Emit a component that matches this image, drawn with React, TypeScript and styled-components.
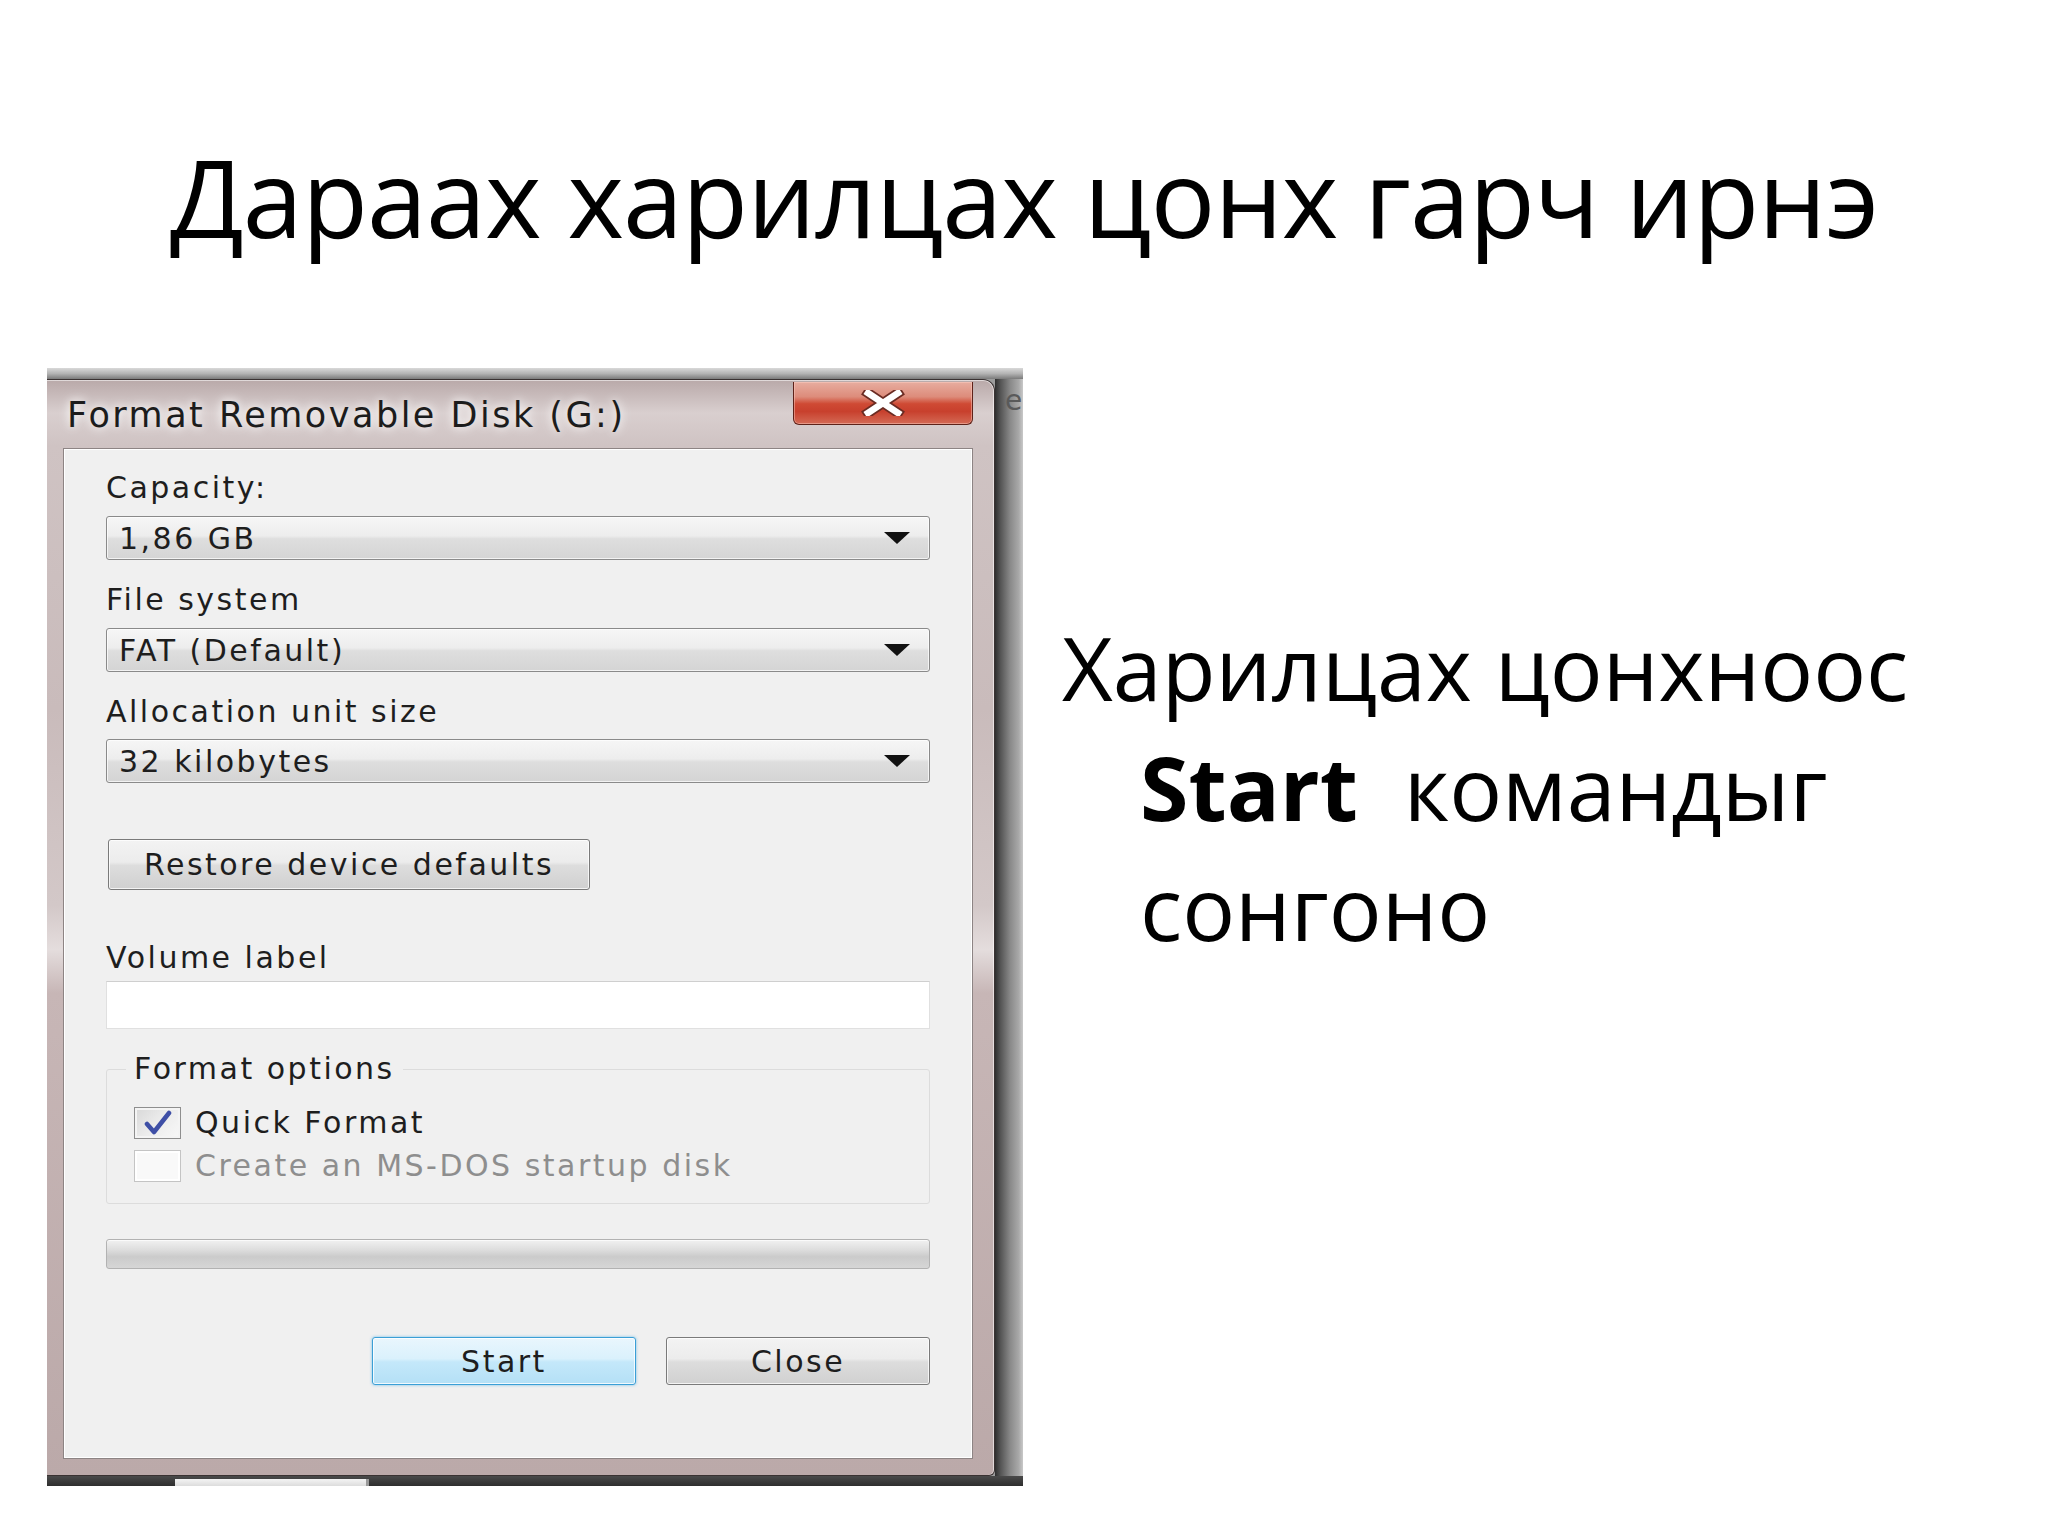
import React from "react";
import styled, { createGlobalStyle } from "styled-components";

const Global = createGlobalStyle`
  html, body { margin: 0; padding: 0; background: #ffffff; }
  body { width: 2048px; height: 1536px; overflow: hidden; font-family: "Open Sans", "Noto Sans", sans-serif; color: #000; }
  * { box-sizing: border-box; }
`;

const Page = styled.div`
  width: 2048px;
  height: 1536px;
  background: #ffffff;
  display: flex;
  flex-direction: column;
`;

const Title = styled.h1`
  margin: 0;
  padding-top: 143px;
  font-family: "Open Sans", "Noto Sans", sans-serif;
  font-weight: 400;
  font-size: 108px;
  line-height: 108px;
  text-align: center;
  color: #000;
  letter-spacing: -1px;
`;

const Content = styled.div`
  margin-top: 117px;
  padding-left: 47px;
  display: flex;
  align-items: flex-start;
  gap: 39px;
`;

/* ---------- screenshot of the dialog ---------- */

const Shot = styled.div`
  width: 976px;
  height: 1118px;
  display: flex;
  flex-direction: column;
  background: #9c9c9c;
  overflow: hidden;
`;

const TopStrip = styled.div`
  height: 11px;
  background: linear-gradient(180deg, #d9d9d9 0%, #b4b4b4 50%, #7a7a7a 100%);
`;

const Middle = styled.div`
  height: 1097px;
  display: flex;
`;

const BottomStrip = styled.div`
  height: 10px;
  display: flex;
  background: linear-gradient(180deg, #4a4a4a 0%, #2e2e2e 100%);
`;

const BottomGap = styled.div<{ $w: number }>`
  width: ${(p) => p.$w}px;
`;

const BottomTab = styled.div`
  width: 194px;
  margin-top: 3px;
  background: linear-gradient(180deg, #f4f4f4 0%, #dcdcdc 100%);
  border-right: 3px solid #9a9a9a;
`;

const Window = styled.div`
  width: 948px;
  display: flex;
  flex-direction: column;
  border: 1px solid #3a3232;
  border-left: none;
  border-radius: 0 12px 6px 0;
  background: linear-gradient(
    180deg,
    #b9a9a9 0%,
    #d9cfcf 3%,
    #cfc3c3 6%,
    #c9bbbb 30%,
    #d3c8c8 48%,
    #e4dddd 52%,
    #c7b6b6 56%,
    #bba9a9 100%
  );
  box-shadow: inset -1px 0 0 rgba(255, 255, 255, 0.55), inset 0 1px 0 rgba(255, 255, 255, 0.55);
`;

const RightEdge = styled.div`
  flex: 1;
  position: relative;
  background: linear-gradient(90deg, #2e2e2e 0%, #555555 20%, #8a8a8a 55%, #a9a9a9 85%, #c9c9c9 100%);
`;

const EdgeGlyph = styled.span`
  position: absolute;
  top: 8px;
  left: 10px;
  font-family: "DejaVu Sans", sans-serif;
  font-size: 28px;
  line-height: 28px;
  color: #5a5a5a;
`;

const TitleBar = styled.div`
  height: 68px;
  display: flex;
  align-items: flex-start;
  justify-content: space-between;
  padding: 0 21px 0 20px;
`;

const WinTitle = styled.div`
  margin-top: 15px;
  font-family: "DejaVu Sans", sans-serif;
  font-size: 35px;
  line-height: 40px;
  letter-spacing: 2.5px;
  color: #1c1c1c;
  text-shadow: 0 0 8px rgba(255, 255, 255, 0.9), 0 0 14px rgba(255, 255, 255, 0.7);
`;

const CloseX = styled.div`
  width: 180px;
  height: 43px;
  margin-top: 2px;
  display: flex;
  align-items: center;
  justify-content: center;
  border: 1px solid #5e2219;
  border-top: none;
  border-radius: 0 0 6px 6px;
  background: linear-gradient(
    180deg,
    #e7ada0 0%,
    #dd8c7b 35%,
    #cf4a34 52%,
    #c8402d 70%,
    #d46a55 100%
  );
  box-shadow: inset 0 0 0 1px rgba(255, 210, 200, 0.45);
`;

const Client = styled.div`
  height: 1011px;
  margin: 0 21px 0 16px;
  display: flex;
  flex-direction: column;
  padding: 21px 42px 0 42px;
  background: #f0f0f0;
  border: 1px solid #8d8484;
  box-shadow: inset 0 0 0 1px #ffffff;
  font-family: "DejaVu Sans", sans-serif;
  font-size: 30px;
  letter-spacing: 2.5px;
  color: #1e1e1e;
`;

const Label = styled.div<{ $mt: number }>`
  margin-top: ${(p) => p.$mt}px;
  height: 36px;
  line-height: 36px;
  white-space: nowrap;
`;

const Combo = styled.div<{ $mt: number }>`
  margin-top: ${(p) => p.$mt}px;
  height: 44px;
  display: flex;
  align-items: center;
  justify-content: space-between;
  padding: 0 19px 0 12px;
  border: 1px solid #8a8a8a;
  border-radius: 3px;
  background: linear-gradient(180deg, #f6f6f6 0%, #ededed 45%, #dedede 52%, #d4d4d4 100%);
  box-shadow: inset 0 0 0 1px rgba(255, 255, 255, 0.7);
  white-space: nowrap;
`;

const Button = styled.div<{ $primary?: boolean; $w: number }>`
  width: ${(p) => p.$w}px;
  height: ${(p) => (p.$primary !== undefined ? 48 : 51)}px;
  display: flex;
  align-items: center;
  justify-content: center;
  border: 1px solid ${(p) => (p.$primary ? "#3b9fd6" : "#7a7a7a")};
  border-radius: 3px;
  background: ${(p) =>
    p.$primary
      ? "linear-gradient(180deg, #e9f6fd 0%, #daf1fc 45%, #c4e8fa 52%, #b4e0f6 100%)"
      : "linear-gradient(180deg, #f3f3f3 0%, #ececec 45%, #dddddd 52%, #d0d0d0 100%)"};
  box-shadow: ${(p) =>
    p.$primary
      ? "inset 0 0 0 1px rgba(255,255,255,0.8), 0 0 3px rgba(60, 170, 230, 0.7)"
      : "inset 0 0 0 1px rgba(255,255,255,0.75)"};
  white-space: nowrap;
`;

const RestoreWrap = styled.div`
  margin-top: 56px;
  margin-left: 2px;
  display: flex;
`;

const TextField = styled.div`
  margin-top: 5px;
  height: 48px;
  background: #ffffff;
  border: 1px solid #e0e0e0;
  border-top-color: #cfcfcf;
`;

const Group = styled.fieldset`
  margin: 22px 0 0 0;
  padding: 14px 0 16px 27px;
  min-inline-size: 0;
  border: 1px solid #dcdcdc;
  border-radius: 3px;
  display: flex;
  flex-direction: column;
  gap: 0;
`;

const Legend = styled.legend`
  margin-left: -8px;
  padding: 0 8px;
  height: 36px;
  line-height: 36px;
`;

const CheckRow = styled.div<{ $disabled?: boolean }>`
  height: 43px;
  display: flex;
  align-items: center;
  gap: 14px;
  color: ${(p) => (p.$disabled ? "#8e8e8e" : "#1e1e1e")};
  white-space: nowrap;
`;

const Box = styled.div<{ $disabled?: boolean }>`
  width: 47px;
  height: 32px;
  display: flex;
  align-items: center;
  justify-content: center;
  border: 1px solid ${(p) => (p.$disabled ? "#c4c4c4" : "#8e8e8e")};
  background: ${(p) =>
    p.$disabled
      ? "#f9f9f9"
      : "linear-gradient(135deg, #d8d8d8 0%, #ececec 50%, #f8f8f8 100%)"};
  box-shadow: inset 0 0 0 2px ${(p) => (p.$disabled ? "#ffffff" : "#f4f4f4")};
`;

const Progress = styled.div`
  margin-top: 35px;
  height: 30px;
  border: 1px solid #b2b2b2;
  border-radius: 3px;
  background: linear-gradient(180deg, #f1f1f1 0%, #dddddd 35%, #cbcbcb 60%, #d6d6d6 100%);
  box-shadow: inset 0 1px 0 #fafafa;
`;

const ButtonRow = styled.div`
  margin-top: 68px;
  display: flex;
  justify-content: flex-end;
  gap: 30px;
`;

/* ---------- right text ---------- */

const Side = styled.div`
  margin-top: 239px;
  font-family: "Open Sans", "Noto Sans", sans-serif;
  font-size: 88px;
  line-height: 120px;
  color: #000;
  padding-left: 78px;
  text-indent: -78px;
  white-space: nowrap;
`;

const Strong = styled.b`
  font-weight: 700;
`;

const Arrow = () => (
  <svg width="26" height="12" viewBox="0 0 26 12">
    <polygon points="0,0 26,0 13,12" fill="#111" />
  </svg>
);

const CheckMark = () => (
  <svg width="32" height="26" viewBox="0 0 32 26">
    <path d="M5 14 L12 22 L27 3" fill="none" stroke="#3e4fa6" strokeWidth="4.5" strokeLinecap="round" strokeLinejoin="round" />
  </svg>
);

const CloseGlyph = () => (
  <svg width="46" height="26" viewBox="0 0 46 26">
    <path d="M8 3 L38 23 M38 3 L8 23" stroke="#6b2b22" strokeWidth="10" strokeLinecap="square" />
    <path d="M8 3 L38 23 M38 3 L8 23" stroke="#ffffff" strokeWidth="6.5" strokeLinecap="square" />
  </svg>
);

export default function App() {
  return (
    <Page>
      <Global />
      <Title>Дараах харилцах цонх гарч ирнэ</Title>
      <Content>
        <Shot>
          <TopStrip />
          <Middle>
            <Window>
              <TitleBar>
                <WinTitle>Format Removable Disk (G:)</WinTitle>
                <CloseX>
                  <CloseGlyph />
                </CloseX>
              </TitleBar>
              <Client>
                <Label $mt={0}>Capacity:</Label>
                <Combo $mt={10}>
                  <span>1,86 GB</span>
                  <Arrow />
                </Combo>
                <Label $mt={22}>File system</Label>
                <Combo $mt={10}>
                  <span>FAT (Default)</span>
                  <Arrow />
                </Combo>
                <Label $mt={22}>Allocation unit size</Label>
                <Combo $mt={9}>
                  <span>32 kilobytes</span>
                  <Arrow />
                </Combo>
                <RestoreWrap>
                  <Button $w={482}>Restore device defaults</Button>
                </RestoreWrap>
                <Label $mt={50}>Volume label</Label>
                <TextField />
                <Group>
                  <Legend>Format options</Legend>
                  <CheckRow>
                    <Box>
                      <CheckMark />
                    </Box>
                    <span>Quick Format</span>
                  </CheckRow>
                  <CheckRow $disabled>
                    <Box $disabled />
                    <span>Create an MS-DOS startup disk</span>
                  </CheckRow>
                </Group>
                <Progress />
                <ButtonRow>
                  <Button $primary $w={264}>Start</Button>
                  <Button $primary={false} $w={264}>Close</Button>
                </ButtonRow>
              </Client>
            </Window>
            <RightEdge>
              <EdgeGlyph>e</EdgeGlyph>
            </RightEdge>
          </Middle>
          <BottomStrip>
            <BottomGap $w={128} />
            <BottomTab />
          </BottomStrip>
        </Shot>
        <Side>
          Харилцах цонхноос
          <br />
          <Strong>Start</Strong>
          {"\u00a0 "}командыг
          <br />
          сонгоно
        </Side>
      </Content>
    </Page>
  );
}
